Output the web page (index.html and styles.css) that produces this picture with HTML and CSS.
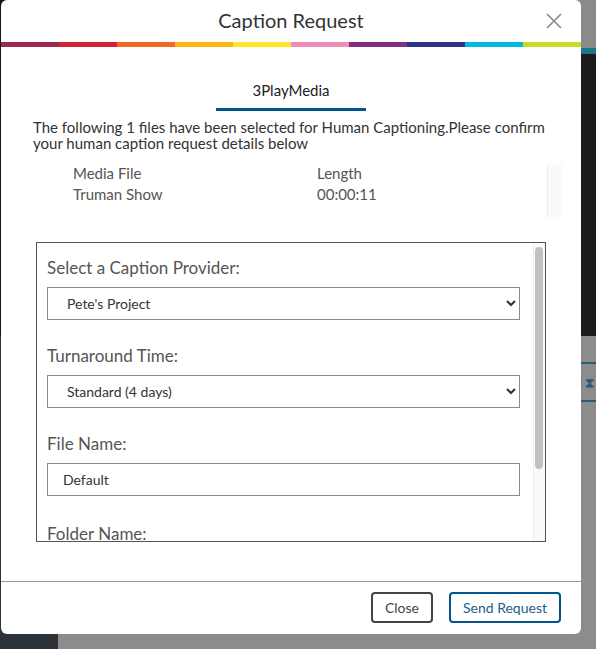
FILE: index.html
```html
<!DOCTYPE html>
<html>
<head>
	<title>Caption Request</title>
	<link rel="stylesheet" href="styles.css">
</head>
<body>
	<!-- ページ裏側 (モーダルの後ろ) -->
	<div class="app">
		<div class="sidebar">
			<div class="sidebarTop"></div>
			<div class="sidebarBottom"></div>
		</div>
		<div class="main">
			<div class="topbar"></div>
			<div class="tealbar"></div>
			<div class="darkarea"></div>
			<div class="content">
				<div class="toolbar"><span>Sort</span><span class="sortIcon">d &#x29D7;</span></div>
			</div>
		</div>
	</div>

	<div class="modal">
		<div class="modalHeader">
			<h1>Caption Request</h1>
			<button class="closeX" aria-label="close">
				<svg width="16" height="16" viewBox="0 0 16 16"><path d="M1 1 L15 15 M15 1 L1 15" stroke="#8a8a8a" stroke-width="1.6" fill="none"/></svg>
			</button>
		</div>
		<div class="rainbow">
			<div class="c1"></div><div class="c2"></div><div class="c3"></div><div class="c4"></div><div class="c5"></div>
			<div class="c6"></div><div class="c7"></div><div class="c8"></div><div class="c9"></div><div class="c10"></div>
		</div>

		<div class="modalBody">
			<div class="tabs">
				<div class="tab active">3PlayMedia</div>
			</div>
			<p class="intro">The following 1 files have been selected for Human Captioning.Please confirm your human caption request details below</p>

			<div class="fileList">
				<div class="fileRows">
					<div class="fileRow">
						<div>Media File</div>
						<div>Length</div>
					</div>
					<div class="fileRow">
						<div>Truman Show</div>
						<div>00:00:11</div>
					</div>
				</div>
				<div class="scrollTrack wide"></div>
			</div>

			<div class="formPanel">
				<div class="formFields">
					<div class="field">
						<label for="provider">Select a Caption Provider:</label>
						<select id="provider">
							<option>Pete's Project</option>
						</select>
					</div>
					<div class="field">
						<label for="turnaround">Turnaround Time:</label>
						<select id="turnaround">
							<option>Standard (4 days)</option>
						</select>
					</div>
					<div class="field">
						<label for="fileName">File Name:</label>
						<input type="text" id="fileName" value="Default">
					</div>
					<div class="field last">
						<label for="folderName">Folder Name:</label>
					</div>
				</div>
				<div class="scrollTrack">
					<div class="scrollThumb"></div>
				</div>
			</div>
		</div>

		<div class="modalFooter">
			<button class="btn">Close</button>
			<button class="btn primary">Send Request</button>
		</div>
	</div>
</body>
</html>
```
FILE: styles.css
```css
* {
	box-sizing: border-box;
	font-family: "Lato", "Noto Sans", sans-serif;
}

body {
	margin: 0;
	width: 596px;
	height: 649px;
	overflow: hidden;
	position: relative;
	background-color: #8a8a8a;
}

/* ページ裏側 */
.app {
	display: grid;
	grid-template-columns: 58px 1fr;
	height: 649px;
}

.sidebar {
	display: flex;
	flex-direction: column;
}
.sidebarTop {height: 336px; background-color: #151515;}
.sidebarBottom {flex: 1; background-color: #2d3338;}

.main {
	display: flex;
	flex-direction: column;
}
.topbar {height: 48px; background-color: #8a8a8a;}
.tealbar {height: 6px; background-color: #1d7688;}
.darkarea {height: 282px; background-color: #1c1c1c;}
.content {
	flex: 1;
	background-color: #8c8c8c;
	padding-top: 26px;
}
.toolbar {
	height: 40px;
	border-top: 2px solid #2c5a79;
	border-bottom: 2px solid #2c5a79;
	display: flex;
	justify-content: flex-end;
	align-items: center;
	gap: 6px;
	padding-right: 2px;
	color: #2c5a79;
	font-size: 13px;
	font-weight: bold;
	overflow: hidden;
}

/* モーダル */
.modal {
	position: absolute;
	left: 1px;
	top: 0;
	width: 580px;
	height: 634px;
	background-color: #fff;
	border-radius: 6px;
	display: flex;
	flex-direction: column;
	overflow: hidden;
}

.modalHeader {
	height: 42px;
	position: relative;
	display: flex;
	justify-content: center;
	align-items: center;
}
.modalHeader h1 {
	margin: 0;
	font-size: 20px;
	font-weight: normal;
	color: #333;
	padding-bottom: 2px;
}
.closeX {
	position: absolute;
	right: 19px;
	top: 13px;
	width: 16px;
	height: 16px;
	padding: 0;
	border: none;
	background: none;
	display: flex;
}

.rainbow {
	height: 5px;
	display: flex;
}
.rainbow div {flex: 1;}
.c1 {background-color: #9c2852;}
.c2 {background-color: #d1223a;}
.c3 {background-color: #ef6a23;}
.c4 {background-color: #fcb415;}
.c5 {background-color: #fde72b;}
.c6 {background-color: #ee8cba;}
.c7 {background-color: #832b86;}
.c8 {background-color: #2d3388;}
.c9 {background-color: #02b9e4;}
.c10 {background-color: #c9da2e;}

.modalBody {
	flex: 1;
	padding: 0 19px 0 32px;
}

.tabs {
	display: flex;
	justify-content: center;
	padding-top: 33px;
	margin-left: -32px;
	margin-right: -19px;
}
.tab {
	width: 150px;
	text-align: center;
	font-size: 15px;
	line-height: 20px;
	color: #222;
	padding-bottom: 8px;
	border-bottom: 3px solid #00558b;
}

.intro {
	margin: 9px 0 0 0;
	font-size: 15px;
	line-height: 15.5px;
	color: #333;
}

/* スクロールバー (自前で描く) */
.scrollTrack {
	width: 12px;
	flex-shrink: 0;
	background-color: #fafafa;
	border-left: 1px solid #ececec;
	padding: 4px 2px 0 1px;
}
.scrollTrack.wide {width: 15px;}
.scrollThumb {
	height: 222px;
	background-color: #c1c1c1;
	border-radius: 4px;
}

.fileList {
	margin-top: 13px;
	height: 53px;
	display: flex;
}
.fileRows {
	flex: 1;
	padding-left: 40px;
	margin-top: -1px;
}
.fileRow {
	display: grid;
	grid-template-columns: 244px 1fr;
	font-size: 15px;
	line-height: 21px;
	color: #555;
}

.formPanel {
	margin: 25px 0 0 3px;
	width: 510px;
	height: 300px;
	border: 1px solid #555;
	display: flex;
}
.formFields {
	flex: 1;
	overflow: hidden;
	padding: 15px 11px 0 10px;
}

.field {margin-bottom: 26px;}
.field label {
	display: block;
	font-size: 17px;
	line-height: 20px;
	color: #555;
	margin-bottom: 9px;
}
.field.last {margin-bottom: 0;}
.field.last label {
	line-height: 17px;
	padding-top: 3px;
	margin-bottom: 0;
}
.field select,
.field input {
	display: block;
	width: 473px;
	height: 33px;
	border: 1px solid #8a8a8a;
	border-radius: 0;
	background-color: #fff;
	padding: 0 10px 0 15px;
	font-size: 14px;
	color: #333;
	outline: none;
}

.modalFooter {
	border-top: 1px solid #999;
	height: 53px;
	display: flex;
	justify-content: flex-end;
	align-items: flex-start;
	gap: 16px;
	padding: 10px 20px 0 0;
}
.btn {
	height: 31px;
	padding: 0 12px;
	background-color: #fff;
	border: 2px solid #444;
	border-radius: 4px;
	font-size: 14px;
	color: #444;
}
.btn.primary {
	border-color: #00558b;
	color: #1b5d8c;
	padding: 0 12px;
}
```
